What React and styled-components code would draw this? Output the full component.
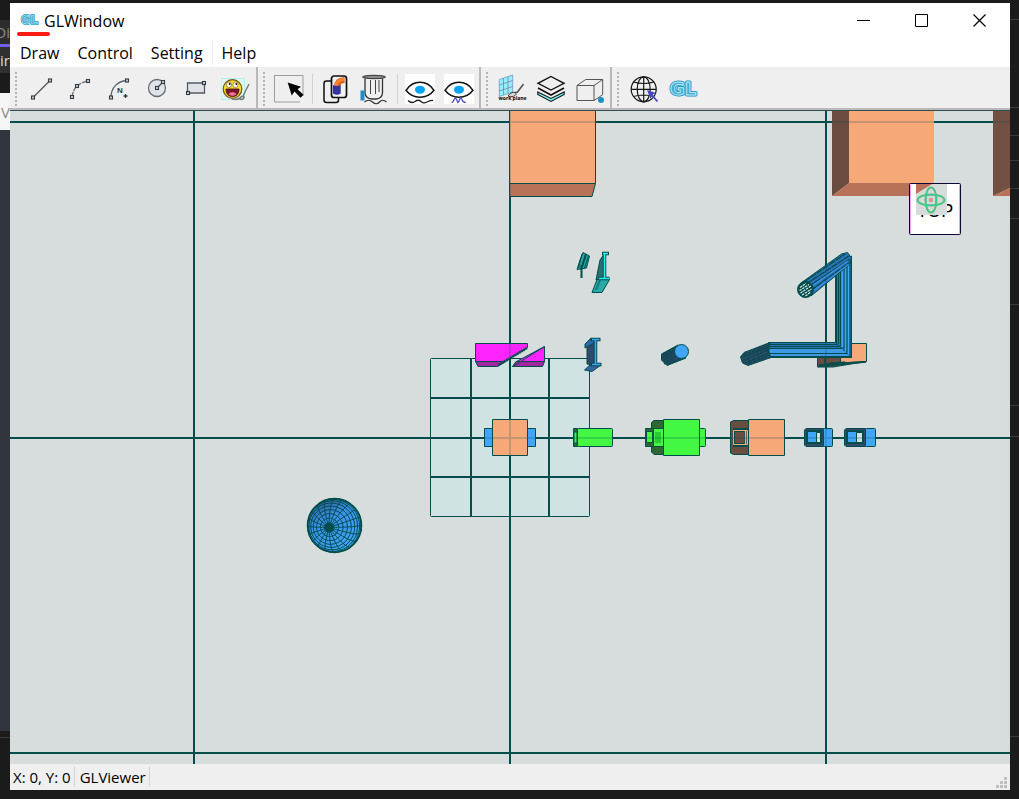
import React from 'react';
import styled, { createGlobalStyle, css } from 'styled-components';

const color = {
  desk: '#1b1b1b',
  chrome: '#efefef',
  scene: '#d6dddc',
  edge: '#004d4b',
  peach: '#f7a879',
  rust: '#b87257',
  brown: '#6a4c41',
  blue: '#41a6f7',
  navy: '#30486a',
  green: '#43f743',
  moss: '#2f6632',
};

const GlobalStyle = createGlobalStyle`
  *, *::before, *::after {
    box-sizing: border-box;
  }

  body {
    margin: 0;
    background: ${color.desk};
    color: #000;
    font-family: 'Open Sans', 'Noto Sans', sans-serif;
    font-size: 15px;
    line-height: 20px;
  }
`;

const Desktop = styled.div`
  display: grid;
  grid-template-columns: 10px minmax(0, 1fr) 9px;
  min-height: 100vh;
`;

const SideStrip = styled.div`
  display: flex;
  flex-direction: column;
  overflow: hidden;
`;

const StripBlock = styled.div`
  display: flex;
  align-items: center;
  justify-content: flex-end;
  flex: ${(p) => (p.$grow ? `1 0 ${p.$height}px` : `0 0 ${p.$height}px`)};
  overflow: hidden;
  background: ${(p) => p.$fill || 'transparent'};
  color: ${(p) => p.$ink || '#8a8a8a'};
  border-bottom: ${(p) => (p.$line ? '1px solid #3a3a3a' : '0')};
`;

const Window = styled.main`
  display: flex;
  flex-direction: column;
  margin: 3px 0 9px;
  background: #fff;
`;

const TitleBar = styled.header`
  display: flex;
  justify-content: space-between;
  height: 37px;
  padding-right: 2px;
`;

const Brand = styled.h1`
  position: relative;
  display: flex;
  align-items: center;
  gap: 4px;
  margin: 0;
  padding: 0 0 2px 9px;
  font-size: 16px;
  font-weight: 400;

  &::after {
    content: '';
    position: absolute;
    left: 7px;
    bottom: 4px;
    width: 33px;
    height: 4px;
    border-radius: 2px;
    background: #fc1a16;
  }
`;

const WindowButton = styled.button`
  display: inline-flex;
  align-items: center;
  justify-content: center;
  width: 58px;
  height: 35px;
  padding: 0;
  border: 0;
  background: none;
`;

const MenuBar = styled.nav`
  display: flex;
  height: 27px;
  padding: 0 1px 2px;
`;

const MenuItem = styled.button`
  padding: 0 9px;
  border: 0;
  background: none;
  color: inherit;
  font: inherit;
  font-size: 16px;
  white-space: nowrap;
  ${(p) =>
    p.$divided &&
    css`
      border-right: 1px solid #ececec;
    `}
`;

const ToolBar = styled.div`
  display: flex;
  height: 43px;
  background: ${color.chrome};
  border-bottom: 2px solid #bcb8bc;
`;

const ToolGroup = styled.div`
  display: flex;
  align-items: center;
  padding: 3px 0 0 5px;
  ${(p) =>
    !p.$last &&
    css`
      border-right: 2px solid #b9b9b9;
    `}
`;

const Grip = styled.span`
  width: 2px;
  height: 34px;
  margin-right: 5px;
  background: repeating-linear-gradient(#b4b4b4 0 2px, transparent 2px 4px);
`;

const ToolButton = styled.button`
  display: inline-flex;
  align-items: center;
  justify-content: center;
  width: 39px;
  height: 38px;
  padding: 0;
  border: 0;
  background: none;
`;

const ToolDivider = styled.span`
  width: 1px;
  height: 30px;
  margin: 0 3px;
  background: #d2d2d2;
`;

const Viewport = styled.section`
  display: flex;
  flex: 1 1 0;
  min-height: 320px;
  border-top: 1px solid #2f4f50;
  background: ${color.scene};
`;

const SceneSvg = styled.svg`
  flex: 1;
  width: 100%;
  min-width: 0;
  height: auto;
  min-height: 0;
`;

const StatusBar = styled.footer`
  display: flex;
  align-items: center;
  height: 26px;
  background: ${color.chrome};
`;

const StatusField = styled.span`
  padding: ${(p) => (p.$first ? '0 3px' : '0 3px 0 5px')};
  border-right: 1px solid #d4d4d4;
  white-space: nowrap;
`;

const SizeGrip = styled.svg`
  align-self: flex-end;
  margin: 0 3px 2px auto;
`;

const Icon = ({ children }) => (
  <svg width="31" height="31" viewBox="0 0 31 31" fill="none" aria-hidden="true">
    {children}
  </svg>
);

const Node = ({ x, y }) => (
  <rect x={x - 1.5} y={y - 1.5} width="3" height="3" fill="#c4ccd4" stroke="#323a42" strokeWidth="1.1" />
);

const GLMark = ({ width, height }) => (
  <svg width={width} height={height} viewBox="0 0 32 20" overflow="visible" aria-hidden="true">
    <g
      fontFamily="'DejaVu Sans', sans-serif"
      fontSize="18"
      fontWeight="700"
      strokeLinejoin="round"
      textAnchor="middle"
    >
      <text x="16" y="16" fill="#1b9ccb" stroke="#1b9ccb" strokeWidth="3">GL</text>
      <text x="16" y="16" fill="#3fadd4" stroke="#c4e6f1" strokeWidth="1">GL</text>
    </g>
  </svg>
);

const EyeShape = () => (
  <>
    <path d="M0 0h30v30H0z" fill="#fff" />
    <path d="M1 16.3C8 5.5 22 5.5 29 16.3C22 25.5 8 25.5 1 16.3z" stroke="#111" strokeWidth="1.5" />
    <ellipse cx="15" cy="15.7" rx="5" ry="4" fill="#03a4f2" />
  </>
);

const icons = {
  line: (
    <>
      <path d="M7 23.5L24 6.5" stroke="#50565c" strokeWidth="1.3" />
      <Node x={7} y={23.5} />
      <Node x={24} y={6.5} />
    </>
  ),
  arc: (
    <>
      <path d="M7 23Q8 16 12 12Q17 8 23 7" stroke="#777d82" strokeWidth="1.4" strokeDasharray="5 1" />
      <Node x={7} y={23} />
      <Node x={12} y={12} />
      <Node x={23} y={7} />
    </>
  ),
  spline: (
    <>
      <path d="M7 23.5C7 14 13 7 23 6.5" stroke="#5c6268" strokeWidth="1.3" />
      <Node x={7} y={23.5} />
      <Node x={23} y={6.5} />
      <text x="13" y="19" fill="#31373d" fontFamily="'Liberation Sans', sans-serif" fontSize="8" fontWeight="700">
        N
      </text>
      <path d="M21.5 20v4M19.5 22h4" stroke="#31373d" strokeWidth="1.3" />
    </>
  ),
  circle: (
    <>
      <circle cx="14" cy="14" r="8.5" fill="#e0e4e8" stroke="#666c73" strokeWidth="1.3" />
      <path d="M14 14l6-6" stroke="#444b52" strokeWidth="1.2" />
      <Node x={14} y={14} />
      <Node x={20} y={8} />
    </>
  ),
  rect: (
    <>
      <path d="M5.5 9h17v10h-17z" fill="#dfe3e7" stroke="#555b62" strokeWidth="1.3" />
      <Node x={6} y={19} />
      <Node x={22} y={9} />
    </>
  ),
  emoji: (
    <>
      <rect x="0" y="4.5" width="23.5" height="21" rx="1" fill="#e6f2f2" stroke="#aef0f0" />
      <circle cx="11.5" cy="15" r="9.3" fill="#f8d732" stroke="#6d5712" strokeWidth="1.2" />
      <ellipse cx="8" cy="10.8" rx="2.6" ry="2.8" fill="#fff" stroke="#6d5712" strokeWidth=".6" />
      <ellipse cx="14.500" cy="10.8" rx="2.6" ry="2.8" fill="#fff" stroke="#6d5712" strokeWidth=".6" />
      <circle cx="8.7" cy="10" r="1" fill="#111" />
      <circle cx="15.3" cy="10" r="1" fill="#111" />
      <path d="M5 15h13c0 5-2.5 7.5-6.5 7.5S5 20 5 15z" fill="#77162c" stroke="#431020" strokeWidth=".8" />
      <path d="M7.500 20c2-2.4 6-2.4 8 0c-2 2.4-6 2.4-8 0z" fill="#f07398" />
      <path
        d="M11 25q7 1.5 9.5-2.5q2.5-1 2.5 1q-2 3-4 1.5M22 22L28 10"
        stroke="#77797b"
        strokeWidth="1.5"
      />
    </>
  ),
  select: (
    <>
      <path d="M29 22V1.5H.5V28H26" stroke="#9d9d9d" />
      <path d="M13.7 8.5L27 12.7L23.5 15.2L29.5 20.7L26.5 23.7L20.5 17.5L17.7 21.5z" fill="#000" />
    </>
  ),
  pipe: (
    <>
      <rect x="4" y="7" width="14.5" height="21.5" rx="2.5" stroke="#111" strokeWidth="1.5" />
      <rect x="11.5" y="2" width="15" height="21.5" rx="2.5" fill="#f1f1f1" stroke="#111" strokeWidth="1.7" />
      <path d="M17 13Q17 6.5 24.5 6" stroke="#d8631d" strokeWidth="6" />
      <path d="M16 12Q16.5 6 24.5 5" stroke="#f88434" strokeWidth="3" />
      <path d="M13 11v8.5q3.8 2.5 7.7 0V11q-3.9 2-7.7 0z" fill="#32339c" />
    </>
  ),
  container: (
    <>
      <path d="M6 4.5V19Q6.5 24.5 13 25h4Q23 24.5 23.5 19V4.5" stroke="#333" strokeWidth="1.3" />
      <path d="M11.5 6v14M16.5 6v14M20 6v12" stroke="#444" />
      <ellipse cx="15" cy="3" rx="11.5" ry="1.7" fill="#8b8b8b" stroke="#222" strokeWidth=".9" />
      <path d="M1.5 16.5h4v10h-4z" fill="#218bc6" />
      <path d="M5.5 28q4-3.5 8 0t7 0t7 0" stroke="#333" strokeWidth="1.2" />
    </>
  ),
  eyeWave: (
    <>
      <EyeShape />
      <path d="M3 26.5q3.5 3.5 7 1t6 0t6 .5t6-1.5" stroke="#222" strokeWidth="1.3" />
    </>
  ),
  eyeCurve: (
    <>
      <EyeShape />
      <path
        d="M7.5 28.500q1.5 0 2.5-3q1.5-2.500 2.800.5l1 2.500q1.200-1 2-3.500q1-2 2.200.5q.8 3 4 3"
        stroke="#4a49c4"
        strokeWidth="1.2"
      />
    </>
  ),
  workPlane: (
    <>
      <path d="M2.3 5.5L15.7 1V18L2.3 22.5z" fill="#8ff3f3" stroke="#6c9dc9" strokeWidth=".8" />
      <path d="M6.5 4.1V21M11 2.6V19.5M2.3 11L15.7 6.5M2.3 17L15.7 12.5" stroke="#8f72c9" strokeWidth=".8" />
      <path d="M26.5 10L20.5 18L17 19" stroke="#555" strokeWidth="1.6" />
      <path d="M11 22q1-3 6-4l2.5 2Q17 24 11 22z" fill="#d9d9d9" stroke="#333" strokeWidth=".9" />
      <text
        x="15.5"
        y="26"
        fill="#000"
        fontFamily="'Open Sans', sans-serif"
        fontSize="5"
        fontWeight="700"
        textAnchor="middle"
      >
        work plane
      </text>
    </>
  ),
  layers: (
    <>
      <path d="M15 2.5L28 9.3L15 16L2 9.3z" stroke="#111" strokeWidth="1.4" />
      <path d="M2 14L15 21L28 14" stroke="#111" strokeWidth="1.6" />
      <path d="M1.8 18L15 24.5L28.2 18V20.5L15 27.5L1.8 20.5z" fill="#7df3f3" stroke="#111" strokeWidth="1.1" />
    </>
  ),
  box: (
    <>
      <path d="M2 11.5H19V26.5H2zM2 11.5L10.7 5.5H27.7L19 11.5M27.7 5.5V20.7L19 26.5" stroke="#555" />
      <circle cx="26" cy="26" r="3" fill="#1d8fc7" />
    </>
  ),
  globe: (
    <>
      <g stroke="#161616" strokeWidth="1.2">
        <circle cx="15.7" cy="15.3" r="12.5" />
        <ellipse cx="15.7" cy="15.3" rx="6.5" ry="12.5" />
        <path d="M15.7 2.8v25M3.2 15.3h25M5.5 8q10 3 20.5 0M5.5 22.5q10-3 20.5 0" />
      </g>
      <path d="M29.5 27.5L23 20" stroke="#4344c6" strokeWidth="1.8" />
      <path d="M19 16l9 3l-3.5 1.500l-2 4.500z" fill="#4344c6" />
    </>
  ),
};

const toolGroups = [
  [
    { icon: 'line', label: 'Line' },
    { icon: 'arc', label: 'Arc' },
    { icon: 'spline', label: 'Spline' },
    { icon: 'circle', label: 'Circle' },
    { icon: 'rect', label: 'Rectangle' },
    { icon: 'emoji', label: 'Custom' },
  ],
  [
    { icon: 'select', label: 'Select', divided: true },
    { icon: 'pipe', label: 'Copy pipe' },
    { icon: 'container', label: 'Container', divided: true },
    { icon: 'eyeWave', label: 'Show surface' },
    { icon: 'eyeCurve', label: 'Show curve' },
  ],
  [
    { icon: 'workPlane', label: 'Work plane' },
    { icon: 'layers', label: 'Layers' },
    { icon: 'box', label: 'Box' },
  ],
  [
    { icon: 'globe', label: 'World' },
    { icon: 'gl', label: 'GL' },
  ],
];

const menus = [{ name: 'Draw' }, { name: 'Control' }, { name: 'Setting', divided: true }, { name: 'Help' }];

// Wireframe of a sphere whose pole is tipped away from the viewer
const sphereWires = (() => {
  const cx = 334.5;
  const cy = 525.5;
  const r = 27;
  const ax = -0.2;
  const ay = 0.07;
  const az = Math.sqrt(1 - ax * ax - ay * ay);
  const ul = Math.hypot(az, ax);
  const u = [az / ul, 0, -ax / ul];
  const v = [ay * u[2], az * u[0] - ax * u[2], -ay * u[0]];

  const trace = (points) => {
    let pen = 'M';
    let d = '';
    points.forEach(([theta, phi]) => {
      const s = Math.sin(theta);
      const p = [ax, ay, az].map(
        (a, i) => a * Math.cos(theta) + (u[i] * Math.cos(phi) + v[i] * Math.sin(phi)) * s
      );
      if (p[2] < 0) {
        pen = 'M';
        return;
      }
      d += `${pen}${(cx + p[0] * r).toFixed(1)} ${(cy + p[1] * r).toFixed(1)}`;
      pen = 'L';
    });
    return d;
  };

  const wires = [];
  for (let m = 0; m < 20; m += 1) {
    const phi = (m * Math.PI) / 10;
    wires.push(trace(Array.from({ length: 25 }, (_, i) => [(i * Math.PI) / 40, phi])));
  }
  for (let k = 1; k < 11; k += 1) {
    const theta = (k * Math.PI) / 18;
    wires.push(trace(Array.from({ length: 49 }, (_, i) => [theta, (i * Math.PI) / 24])));
  }
  return wires.join('');
})();

const worldGrid = 'M194 111V764M510 111V764M826 111V764M10 122H1010M10 438H1010M10 753H1010';

const BigBoxes = () => (
  <>
    <path d="M509.5 183.5H595.5L592 196.5H509.5z" fill={color.rust} stroke={color.edge} />
    <path d="M509.5 105H595.5V183.5H509.5z" fill={color.peach} stroke={color.edge} />
    <path d="M832 111H849V183L832 196z" fill={color.brown} />
    <path d="M849 183H934L916 196H832z" fill={color.rust} />
    <path d="M849 111H934V183H849z" fill={color.peach} />
    <path d="M993 111H1010V188L993 196z" fill="#735044" />
    <path d="M993 196L1010 188V196z" fill={color.rust} />
  </>
);

const WorkPlane = () => (
  <>
    <rect x="430.5" y="358.5" width="159" height="158" rx="1" fill="#d0e2e1" stroke={color.edge} />
    <path d="M471 358V516M549 358V516M430 398H589M430 477H589" stroke={color.edge} strokeWidth="2" />
    <path d="M510 358V517M430 438H590" stroke={color.edge} strokeWidth="2" />
  </>
);

const Wedges = () => (
  <>
    <path d="M475.5 361.5H505L497.5 366.5H478z" fill="#a126a2" />
    <path d="M475.5 343.5H527.5V347.5L505 361.5H475.5z" fill="#fc24fb" />
    <path d="M527 348L498 365.5" strokeWidth="2.5" strokeDasharray="2 .5" />
    <path d="M516 361.5H544.5L542.5 366.5H512.5z" fill="#a126a2" />
    <path d="M544.5 346.5V361.5H516.5z" fill="#fc24fb" />
    <path d="M544.5 346.5L512.5 366.5" />
  </>
);

const Beams = () => (
  <>
    <path d="M583 252.5L589.5 256L586.5 268L577 269.5L580 260z" fill="#28a7a7" />
    <path d="M582 254L578.5 268M588.5 256L584.5 268" />
    <path d="M586 254L581 270M581.5 265V278" strokeWidth="2" />
    <path d="M603.5 255V278L596 280L600 260z" fill="#2a7070" />
    <path d="M597 279.5H609.5L602 292.5H592z" fill="#2ba9a8" />
    <path d="M600 280L596 290" strokeWidth="2" opacity=".5" />
    <path d="M602 253.5H609M604.5 253V279M598.5 278.5H609.5" strokeWidth="3.5" />
    <path d="M603 253.5H608M604.5 253V279M599 278.5H609" stroke="#25f2f2" strokeWidth="1.6" />
    <path d="M587 344.5L594.5 340V365L587 364z" fill={color.navy} />
    <path d="M590.5 338.5H600L596 342L585 348V344z" fill="#2f68a8" />
    <path d="M590 365H601L592 371.5L584.5 370z" fill="#3563a3" />
    <path d="M590.5 339.5H600.5M595.5 339V365M591 364.5H601.5" strokeWidth="3.5" />
    <path d="M592 339.5H599.5M595.5 339V365M592 364.5H600.5" stroke={color.blue} strokeWidth="1.6" />
  </>
);

const Cylinder = () => (
  <>
    <path d="M678 345L661.5 354V360L667 365.5L686 358z" fill="#2c4566" />
    <path
      d="M678 346L662 355M677 349L662 358M676 352L663 361M677 355L664 364M681 358L667 365"
      strokeWidth="1.3"
      strokeDasharray="4 .6"
    />
    <circle cx="681.5" cy="351.5" r="7" fill={color.blue} />
  </>
);

const Elbow = () => (
  <>
    <path d="M840.5 343.5H866.5V361.5L840.5 363z" fill={color.peach} />
    <path d="M817.5 357.5H840.5V363L866 361.5L833 367H817.5z" fill={color.brown} />
    <path d="M818 366.5L866 362M819 365L845 362M825 357V366M830 363H850" strokeWidth="1.5" />
    <path d="M835.5 268L851.5 256V357.5L835.5 343z" fill="#2c75b5" />
    <path d="M842.5 264V347M845.5 262V351M848.5 262V354" stroke={color.blue} strokeWidth="2" />
    <path d="M836.5 266V343M838.5 265V344M840.5 263V346M844 262V349M847 260V352M850 258V355" />
    <path d="M768.5 342.5H835.5L851.5 357.5H768.5z" fill="#2c75b5" />
    <path d="M770 350H843M770 352H846M770 355H849" stroke={color.blue} strokeWidth="1.6" />
    <path d="M769 344.5H837M769 346.5H839M769 348.5H841M769 353.5H847M769 356.5H850" />
    <path d="M770 342.5L744 352.5L740.5 357L742.5 363L748 365.5L771 357.5L768 350z" fill={color.navy} />
    <path
      d="M769 345L743 355M768 347.5L741 358M768 350L742 361M769 353L744 363.500M770 355L748 363.500"
      strokeWidth="1.3"
      strokeDasharray="4 .7"
    />
    <path d="M801 283L841.5 254L847.5 252.5L851.5 258L850 264L811 296z" fill="#2f74b8" />
    <path
      d="M804 282L845 254M806 284L849 256M808 287L850 259M810 291L850 262"
      strokeWidth="1.3"
      strokeDasharray="7 .6"
    />
    <path d="M809 288L848 261M812 292L849 264" stroke="#3d92ee" strokeWidth="1.3" />
    <circle cx="805.5" cy="289.5" r="8" fill={color.edge} />
    <path
      d="M800 287.5L806 283.500M799.500 290.500L809 284.500M800.500 293L811 286M802 295L811.500 289M805.500 296L811 292"
      stroke="#dbe7e7"
      strokeWidth="1.2"
      strokeDasharray="2.5 .8"
    />
  </>
);

const AxisParts = () => (
  <>
    <path d="M484.5 428.5H492.5V446.5H484.5zM527.5 428.5H535.5V446.5H527.5z" fill={color.blue} />
    <rect x="492.5" y="419.5" width="35" height="36" fill={color.peach} />

    <rect x="573.5" y="428.5" width="4" height="18" fill={color.moss} />
    <rect x="574" y="432" width="3" height="11" fill={color.green} />
    <rect x="577.5" y="428.5" width="35" height="18" rx="1" fill={color.green} />

    <path d="M654 420.5H663.5V454.5H654L651.5 452V422.5z" fill={color.moss} />
    <rect x="645.5" y="428.5" width="8" height="18" fill={color.moss} />
    <rect x="646.5" y="431.5" width="6" height="11" fill={color.green} />
    <rect x="653.5" y="428.5" width="10" height="18" fill={color.green} />
    <rect x="655" y="432" width="6" height="11" fill="#28cd2d" stroke="none" />
    <rect x="663.5" y="419.5" width="36" height="36" fill={color.green} />
    <rect x="699.5" y="428.5" width="6" height="18" rx="1" fill={color.green} />

    <path d="M733.5 420.5H749.5V454.5H733.5L730.5 453V422z" fill={color.brown} />
    <path d="M733 429H748M733 446H748" strokeWidth="2" />
    <rect x="733.5" y="430.5" width="14" height="14" stroke={color.peach} />
    <rect x="734.5" y="431.5" width="10" height="12" />
    <path d="M745.5 431V444" stroke={color.peach} strokeWidth="1.3" />
    <rect x="748.5" y="419.5" width="36" height="36" fill={color.peach} />

    <path d="M806 428.5H823.5V446.5H806L804.5 445V430z" fill="#35496a" />
    <rect x="807" y="431" width="14" height="12" fill={color.blue} strokeWidth="2" />
    <rect x="816.5" y="432.5" width="4" height="10" fill="#d0e2e1" />
    <rect x="823.5" y="428.5" width="9" height="18" rx="1" fill={color.blue} />

    <path d="M846 428.5H865.5V446.5H846L844.5 445V430z" fill="#35496a" />
    <rect x="847" y="431" width="16" height="12" fill={color.blue} strokeWidth="2" />
    <rect x="856.5" y="432.5" width="6" height="10" fill="#d0e2e1" />
    <rect x="865.5" y="428.5" width="10" height="18" rx="1" fill={color.blue} />
  </>
);

const Sphere = () => (
  <>
    <defs>
      <linearGradient id="ball" x1="0.2" y1="0" x2="0.7" y2="1">
        <stop offset="0" stopColor="#315a91" />
        <stop offset="0.4" stopColor="#3b93ee" />
        <stop offset="1" stopColor="#41a6f7" />
      </linearGradient>
    </defs>
    <circle cx="334.5" cy="525.5" r="27" fill="url(#ball)" strokeWidth="1.5" />
    <path d={sphereWires} />
    <circle cx="329" cy="527.5" r="4" fill={color.edge} />
  </>
);

const ViewCube = () => (
  <>
    <rect x="909.5" y="183.5" width="51" height="51" rx="1" fill="#fff" stroke="#0b0737" />
    <path d="M910.5 234V184.500M959.5 184.500V234" fill="none" stroke="#f79af5" />
    <text
      x="935"
      y="217"
      fill="#000"
      fontFamily="'Liberation Sans', sans-serif"
      fontSize="18"
      textAnchor="middle"
    >
      TOP
    </text>
    <path d="M916 184H947V215H916z" fill="#d5dcda" />
    <path d="M916 184H932L916 194z" fill={color.rust} />
    <g fill="none">
      <ellipse cx="931" cy="200" rx="13.5" ry="5.5" stroke="#8f9e9d" strokeWidth="2" />
      <ellipse cx="931" cy="200" rx="5.5" ry="12.5" stroke="#8f9e9d" strokeWidth="2" />
      <rect x="926" y="195" width="10" height="10" stroke="#6fa6cc" strokeWidth="1.2" />
      <ellipse cx="931" cy="200" rx="13.5" ry="5.5" stroke="#2fd975" strokeWidth="1.2" />
      <ellipse cx="931" cy="200" rx="5.5" ry="12.5" stroke="#2fd975" strokeWidth="1.2" />
    </g>
    <circle cx="931" cy="200" r="2.2" fill="#cf9a7c" />
  </>
);

const Scene = () => (
  <SceneSvg viewBox="10 111 1000 653" preserveAspectRatio="xMidYMid slice" role="img" aria-label="Top view">
    <path d={worldGrid} stroke={color.edge} strokeWidth="2" />
    <WorkPlane />
    <BigBoxes />
    <g fill="none" stroke={color.edge} strokeWidth="1" strokeLinejoin="round">
      <Wedges />
      <Beams />
      <Cylinder />
      <Elbow />
      <AxisParts />
      <Sphere />
    </g>
    <path d={worldGrid} stroke={color.edge} strokeWidth="2" opacity=".2" />
    <ViewCube />
  </SceneSvg>
);

const App = () => (
  <>
    <GlobalStyle />
    <Desktop>
      <SideStrip>
        <StripBlock $height={20} />
        <StripBlock $height={24} $fill="#2d2d2d">Di</StripBlock>
        <StripBlock $height={3} $fill="#7160e8" />
        <StripBlock $height={26} $fill="#303030" $ink="#d8d8d8">ir</StripBlock>
        <StripBlock $height={20} />
        <StripBlock $height={37} $fill="#f5f5f5">V</StripBlock>
        <StripBlock $height={601} $fill="#31353e" $grow />
        <StripBlock $height={7} $line />
        <StripBlock $height={61} />
      </SideStrip>

      <Window>
        <TitleBar>
          <Brand>
            <GLMark width={21} height={13} />
            GLWindow
          </Brand>
          <div>
            <WindowButton type="button" aria-label="Minimize">
              <svg width="13" height="13" stroke="#000" fill="none">
                <path d="M0 6.5H13" />
              </svg>
            </WindowButton>
            <WindowButton type="button" aria-label="Maximize">
              <svg width="13" height="13" stroke="#000" fill="none">
                <path d="M.5.5H12.5V12.5H.5z" />
              </svg>
            </WindowButton>
            <WindowButton type="button" aria-label="Close">
              <svg width="13" height="13" stroke="#000" fill="none">
                <path d="M.5.5L12.5 12.5M12.5.5L.5 12.5" strokeWidth="1.2" />
              </svg>
            </WindowButton>
          </div>
        </TitleBar>

        <MenuBar>
          {menus.map(({ name, divided }) => (
            <MenuItem key={name} type="button" $divided={divided}>
              {name}
            </MenuItem>
          ))}
        </MenuBar>

        <ToolBar role="toolbar">
          {toolGroups.map((tools, i) => (
            <ToolGroup key={tools[0].icon} $last={i === toolGroups.length - 1}>
              <Grip />
              {tools.map(({ icon, label, divided }) => (
                <React.Fragment key={icon}>
                  <ToolButton type="button" aria-label={label}>
                    {icon === 'gl' ? <GLMark width={32} height={20} /> : <Icon>{icons[icon]}</Icon>}
                  </ToolButton>
                  {divided && <ToolDivider />}
                </React.Fragment>
              ))}
            </ToolGroup>
          ))}
        </ToolBar>

        <Viewport>
          <Scene />
        </Viewport>

        <StatusBar>
          <StatusField $first>X: 0, Y: 0</StatusField>
          <StatusField>GLViewer</StatusField>
          <SizeGrip width="11" height="11" fill="#bfbfbf">
            <path d="M8 0h3v3h-3zM4 4h3v3h-3zM8 4h3v3h-3zM0 8h3v3h-3zM4 8h3v3h-3zM8 8h3v3h-3z" />
          </SizeGrip>
        </StatusBar>
      </Window>

      <SideStrip>
        <StripBlock $height={20} $line />
        <StripBlock $height={88} $line />
        <StripBlock $height={28} $line />
        <StripBlock $height={25} $line />
        <StripBlock $height={28} $line />
        <StripBlock $height={30} $line />
        <StripBlock $height={86} $line />
        <StripBlock $height={101} $line />
        <StripBlock $height={31} $line />
        <StripBlock $height={300} $line $grow />
        <StripBlock $height={62} />
      </SideStrip>
    </Desktop>
  </>
);

export default App;
